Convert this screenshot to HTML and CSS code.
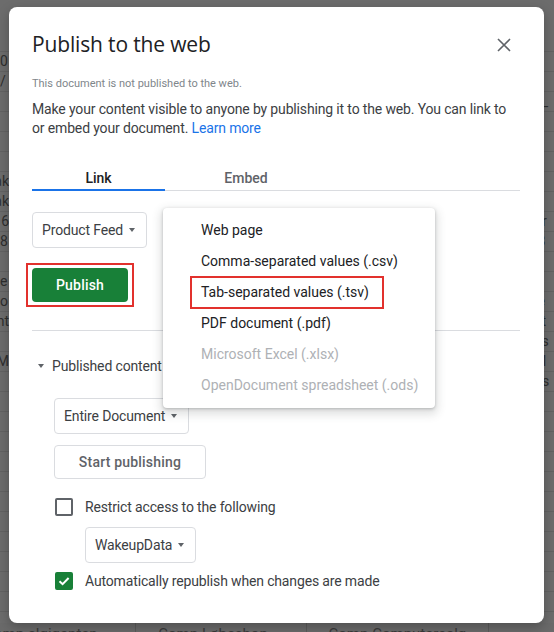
FILE: index.html
```html
<!DOCTYPE html>
<html>
<head>
<meta charset="utf-8">
<link rel="stylesheet" href="styles.css">
</head>
<body>
<div class="sheet">
  <div class="rows">
    <div class="row"><span class="l"></span><span class="r"></span></div>
    <div class="row"><span class="l">0</span><span class="r"></span></div>
    <div class="row"><span class="l">/</span><span class="r"></span></div>
    <div class="row"><span class="l"></span><span class="r">h_</span></div>
    <div class="row"><span class="l"></span><span class="r"></span></div>
    <div class="row"><span class="l"></span><span class="r"></span></div>
    <div class="row"><span class="l"></span><span class="r"></span></div>
    <div class="row"><span class="l">ak</span><span class="r">d</span></div>
    <div class="row"><span class="l">ak</span><span class="r">T</span></div>
    <div class="row"><span class="l">t 6</span><span class="r">dr</span></div>
    <div class="row"><span class="l">8</span><span class="r">:3</span></div>
    <div class="row"><span class="l"></span><span class="r">P</span></div>
    <div class="row"><span class="l">e</span><span class="r">V</span></div>
    <div class="row"><span class="l">o</span><span class="r">le</span></div>
    <div class="row"><span class="l">nt</span><span class="r">et</span></div>
    <div class="row"><span class="l"></span><span class="r">as</span></div>
    <div class="row"><span class="l">M</span><span class="r">M</span></div>
    <div class="row"><span class="l"></span><span class="r">tis</span></div>
    <div class="row"><span class="l"></span><span class="r">r</span></div>
    <div class="row"><span class="l"></span><span class="r"></span></div>
    <div class="row"><span class="l"></span><span class="r"></span></div>
    <div class="row"><span class="l"></span><span class="r"></span></div>
    <div class="row"><span class="l"></span><span class="r"></span></div>
    <div class="row"><span class="l"></span><span class="r"></span></div>
    <div class="row"><span class="l"></span><span class="r"></span></div>
    <div class="row"><span class="l"></span><span class="r"></span></div>
    <div class="row"><span class="l"></span><span class="r"></span></div>
    <div class="row"><span class="l"></span><span class="r"></span></div>
    <div class="row"><span class="l"></span><span class="r"></span></div>
  </div>
  <div class="sheet-tabs">
    <span class="stab first">omp elgiganten <i class="scaret">▾</i></span>
    <span class="stab">Comp Løbeshop <i class="scaret">▾</i></span>
    <span class="stab">Comp Computersalg</span>
    <span class="snav">◀</span>
    <span class="snav">▶</span>
  </div>
</div>

<div class="dialog">
  <div class="head">
    <h1 class="title">Publish to the web</h1>
    <svg class="close" width="14" height="14" viewBox="0 0 14 14"><path d="M1 1L13 13M13 1L1 13" stroke="#5f6368" stroke-width="1.6" fill="none"/></svg>
  </div>
  <p class="status">This document is not published to the web.</p>
  <p class="desc">Make your content visible to anyone by publishing it to the web. You can link to or embed your document. <a class="learn">Learn more</a></p>

  <div class="tabs">
    <div class="tab active">Link</div>
    <div class="tab embed">Embed</div>
  </div>

  <div class="pub-area">
    <div class="select">Product Feed <span class="caret"></span></div>
    <div class="menu">
      <div class="item">Web page</div>
      <div class="item">Comma-separated values (.csv)</div>
      <div class="item marked">Tab-separated values (.tsv)</div>
      <div class="item">PDF document (.pdf)</div>
      <div class="item disabled">Microsoft Excel (.xlsx)</div>
      <div class="item disabled">OpenDocument spreadsheet (.ods)</div>
    </div>
    <div class="redbox"><button class="publish">Publish</button></div>
  </div>

  <div class="sep"></div>

  <div class="published-head"><span class="caret small"></span>Published content &amp; settings</div>
  <div class="indent">
    <div class="select">Entire Document <span class="caret"></span></div>
    <button class="start">Start publishing</button>
    <div class="check-row"><span class="cb"></span><span>Restrict access to the following</span></div>
    <div class="select sub">WakeupData <span class="caret"></span></div>
    <div class="check-row auto"><span class="cb checked"><svg width="14" height="14" viewBox="0 0 14 14"><path d="M2.5 7.2L5.6 10.2L11.6 4" stroke="#fff" stroke-width="2" fill="none"/></svg></span><span>Automatically republish when changes are made</span></div>
  </div>
</div>
</body>
</html>
```

FILE: styles.css
```css
html, body {
  margin: 0;
  padding: 0;
}
body {
  width: 554px;
  height: 632px;
  overflow: hidden;
  position: relative;
  background: #6c6c6c;
  font-family: Roboto, "Liberation Sans", Arial, sans-serif;
}

/* underlying spreadsheet (dimmed) */
.sheet {
  width: 554px;
  height: 632px;
  display: flex;
  flex-direction: column;
  color: #2e2e2e;
  font-size: 14px;
}
.rows {
  flex: 1;
  display: flex;
  flex-direction: column;
  padding-top: 32px;
  overflow: hidden;
}
.row {
  height: 20px;
  flex: none;
  display: flex;
  justify-content: space-between;
  align-items: center;
  border-bottom: 1px solid #626262;
  box-sizing: border-box;
  line-height: 19px;
}
.row .l { width: 9px; overflow: hidden; white-space: nowrap; direction: rtl; text-align: left; }
.row .r { width: 20px; overflow: hidden; white-space: nowrap; padding-left: 1px; }
.sheet-tabs {
  height: 9px;
  flex: none;
  display: flex;
  align-items: flex-start;
  overflow: hidden;
  font-size: 15px;
  line-height: 18px;
  color: #3a3a3a;
  background: #6a6a6a;
}
.stab {
  white-space: nowrap;
  padding: 2px 22px 0 0;
  border-right: 1px solid #5a5a5a;
  margin-right: 22px;
}
.stab.first { margin-left: -6px; }
.scaret { font-style: normal; font-size: 11px; margin-left: 6px; }
.snav { font-size: 11px; padding-top: 4px; margin-left: 14px; }

/* dialog */
.dialog {
  position: absolute;
  left: 9px;
  top: 7px;
  width: 535px;
  height: 616px;
  box-sizing: border-box;
  background: #fff;
  border-radius: 8px;
  padding: 23px 24px 0 23px;
  color: #3c4043;
  box-shadow: 0 4px 12px rgba(0,0,0,0.25);
}
.head {
  display: flex;
  justify-content: space-between;
  align-items: flex-start;
}
.title {
  margin: 0;
  font-family: "Open Sans", Roboto, sans-serif;
  font-weight: 400;
  font-size: 21px;
  line-height: 28px;
  color: #202124;
  letter-spacing: -0.15px;
}
.close {
  margin-top: 8px;
  margin-right: 9px;
}
.status {
  margin: 18px 0 0;
  font-size: 11px;
  line-height: 16px;
  color: #80868b;
}
.desc {
  margin: 8px 0 0;
  font-size: 14px;
  line-height: 19px;
  color: #3c4043;
  letter-spacing: -0.15px;
}
.learn { color: #1a73e8; }

.tabs {
  margin-top: 22px;
  display: flex;
  border-bottom: 1px solid #dadce0;
}
.tab {
  padding: 8px 0 1px;
  line-height: 20px;
  font-size: 14px;
  font-weight: 500;
  text-align: center;
  border-bottom: 2px solid transparent;
  margin-bottom: -1px;
  color: #5f6368;
}
.tab.active {
  width: 133px;
  color: #202124;
  border-bottom-color: #1a73e8;
}
.tab.embed { width: 162px; }

.pub-area {
  position: relative;
  margin-top: 21px;
}
.select {
  display: inline-flex;
  align-items: center;
  height: 36px;
  box-sizing: border-box;
  padding: 0 11px 0 9px;
  border: 1px solid #dadce0;
  border-radius: 4px;
  font-size: 14px;
  color: #3c4043;
  gap: 6px;
  letter-spacing: -0.15px;
}
.caret {
  width: 0;
  height: 0;
  border-left: 3.5px solid transparent;
  border-right: 3.5px solid transparent;
  border-top: 4px solid #5f6368;
  display: inline-block;
}
.redbox {
  margin-top: 15px;
  margin-left: -6px;
  width: 108px;
  box-sizing: border-box;
  border: 2px solid #e2312d;
  padding: 3px 4px;
}
.publish {
  display: block;
  width: 96px;
  height: 34px;
  border: none;
  border-radius: 4px;
  background: #188038;
  color: #fff;
  font-family: Roboto, sans-serif;
  font-weight: 500;
  font-size: 14px;
  letter-spacing: 0.2px;
}

.menu {
  position: absolute;
  left: 131px;
  top: -4px;
  width: 272px;
  box-sizing: border-box;
  padding: 7px 0;
  background: #fff;
  border-radius: 4px;
  box-shadow: 0 1px 3px rgba(60,64,67,0.3), 0 4px 8px 3px rgba(60,64,67,0.15);
  z-index: 2;
}
.item {
  position: relative;
  height: 31px;
  line-height: 31px;
  padding-left: 38px;
  font-size: 14px;
  color: #202124;
  white-space: nowrap;
}
.item.disabled { color: #aeb1b5; }
.item.marked::after {
  content: "";
  position: absolute;
  left: 27px;
  right: 51px;
  top: -1px;
  bottom: -1px;
  border: 2px solid #e2312d;
}

.sep {
  margin-top: 23px;
  height: 1px;
  background: #dadce0;
}
.published-head {
  margin-top: 25px;
  display: flex;
  align-items: center;
  font-size: 14px;
  line-height: 20px;
  color: #3c4043;
  white-space: nowrap;
  letter-spacing: -0.15px;
}
.caret.small {
  margin: 0 8px 0 6px;
}
.indent {
  padding-left: 22px;
  display: flex;
  flex-direction: column;
  align-items: flex-start;
}
.indent > .select { margin-top: 22px; }
.start {
  margin-top: 11px;
  width: 152px;
  height: 34px;
  box-sizing: border-box;
  background: #fff;
  border: 1px solid #dadce0;
  border-radius: 4px;
  font-family: Roboto, sans-serif;
  font-size: 14px;
  font-weight: 500;
  color: #5f6368;
  letter-spacing: 0.2px;
}
.check-row {
  margin-top: 18px;
  display: flex;
  align-items: center;
  font-size: 14px;
  line-height: 20px;
  color: #3c4043;
  gap: 12px;
  margin-left: 1px;
  letter-spacing: -0.15px;
}
.cb {
  width: 18px;
  height: 18px;
  box-sizing: border-box;
  border: 2px solid #5f6368;
  border-radius: 2px;
  display: flex;
  align-items: center;
  justify-content: center;
}
.cb.checked {
  background: #188038;
  border-color: #188038;
}
.indent > .select.sub { margin-top: 10px; margin-left: 31px; }
.check-row.auto { margin-top: 8px; }
```
